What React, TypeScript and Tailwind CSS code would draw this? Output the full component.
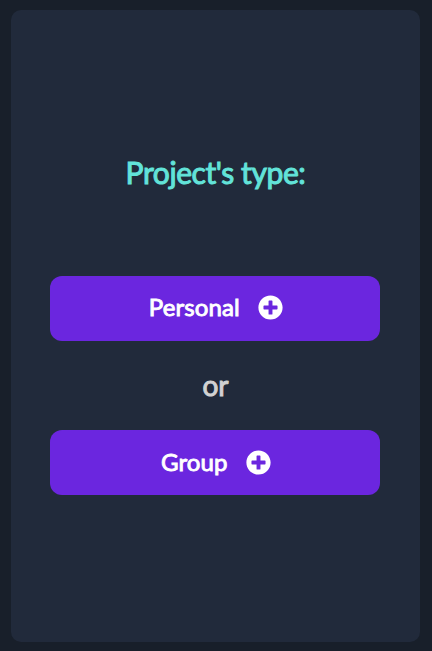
import React from "react";
import { FaPlusCircle } from "react-icons/fa";

function TypeButton({ label, padding }: { label: string; padding: string }) {
  return (
    <button className={`flex h-[65px] w-[330px] items-center justify-center gap-[18.5px] rounded-[12px] bg-[#6b26df] pl-[2px] text-[24px] font-normal leading-8 text-white ${padding}`}>
      <span className="tracking-[0.1px] [-webkit-text-stroke:0.9px_currentColor]">{label}</span>
      <FaPlusCircle className="size-[25px]" />
    </button>
  );
}

export default function App() {
  return (
    <main className="h-[651px] w-[432px] bg-[#181f2a] pl-[11px] pt-[10px] font-['Lato',sans-serif]">
      <section className="flex h-[632px] w-[409px] flex-col rounded-[10px] bg-[#212a3b] pl-[39px] pt-[144px]">
        <h1 className="w-[330px] pl-px text-center text-[30px] font-normal leading-9 tracking-[-0.42px] text-[#62e3d9] [-webkit-text-stroke:1px_currentColor]">Project's type:</h1>
        <div className="mt-[86px] flex w-[330px] flex-col items-center">
          <TypeButton label="Personal" padding="pb-[3px]" />
          <p className="flex h-[89px] items-center pb-[1px] pl-px text-[28px] font-normal text-[#d2d2d2] [-webkit-text-stroke:1px_currentColor]">or</p>
          <TypeButton label="Group" padding="pb-[1px]" />
        </div>
      </section>
    </main>
  );
}
